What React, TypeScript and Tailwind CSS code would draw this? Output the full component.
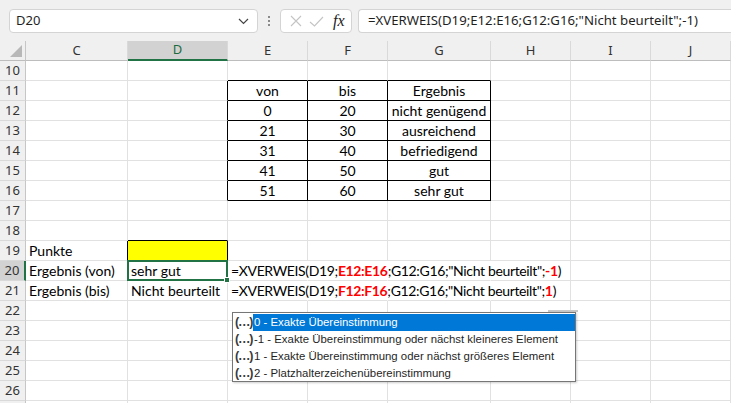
import React from 'react';

const cols = ['C', 'D', 'E', 'F', 'G', 'H', 'I', 'J'];
const widths = ['w-[102px]', 'w-[100px]', 'w-[80px]', 'w-[80px]', 'w-[103px]', 'w-[80px]', 'w-[80px]', 'w-[80px]'];

const table: Record<number, string[]> = {
  11: ['von', 'bis', 'Ergebnis'],
  12: ['0', '20', 'nicht genügend'],
  13: ['21', '30', 'ausreichend'],
  14: ['31', '40', 'befriedigend'],
  15: ['41', '50', 'gut'],
  16: ['51', '60', 'sehr gut'],
};

const rows = [10, 11, 12, 13, 14, 15, 16, 17, 18, 19, 20, 21, 22, 23, 24, 25, 26, 27];

function Formula({ range, last }: { range: string; last: string }) {
  return (
    <span className="tracking-[-0.35px]">
      =XVERWEIS(D19;<span className="text-[#ff0000] font-bold">{range}</span>;G12:G16;"Nicht beurteilt";
      <span className="text-[#ff0000] font-bold">{last}</span>)
    </span>
  );
}

function cellContent(r: number, c: number) {
  if (table[r] && c >= 2 && c <= 4) return table[r][c - 2];
  if (c === 0) {
    if (r === 19) return 'Punkte';
    if (r === 20) return 'Ergebnis (von)';
    if (r === 21) return 'Ergebnis (bis)';
  }
  if (c === 1) {
    if (r === 20) return 'sehr gut';
    if (r === 21) return 'Nicht beurteilt';
  }
  if (c === 2) {
    if (r === 20) return <Formula range="E12:E16" last="-1" />;
    if (r === 21) return <Formula range="F12:F16" last="1" />;
  }
  return null;
}

function Cell({ r, c }: { r: number; c: number }) {
  const inTable = r >= 11 && r <= 16;
  const blackRight = (inTable && c >= 1 && c <= 4) || (r === 19 && c <= 1);
  const blackBottom = (r >= 10 && r <= 16 && c >= 2 && c <= 4) || ((r === 18 || r === 19) && c === 1);
  const overflowRow = (r === 20 || r === 21) && c >= 2 && c <= 4;
  const right = blackRight ? 'border-r-black' : overflowRow ? 'border-r-white' : 'border-r-[#e1e1e1]';
  const bottom = blackBottom ? 'border-b-black' : 'border-b-[#e1e1e1]';
  const centered = inTable && c >= 2 && c <= 4;
  const yellow = r === 19 && c === 1;
  return (
    <div
      className={`${widths[c]} h-[20px] shrink-0 border-r border-b ${right} ${bottom} ${yellow ? 'bg-[#ffff00]' : 'bg-white'} relative flex items-end leading-[18px] ${centered ? 'justify-center' : 'pl-[3px]'} whitespace-nowrap text-[14px] text-black`}
    >
      <span className={overflowRow ? 'relative z-10' : ''}>{cellContent(r, c)}</span>
      {r === 20 && c === 1 && (
        <div className="absolute -left-[1px] -top-[1px] w-[101px] h-[21px] border-2 border-[#217346] z-20">
          <div className="absolute -right-[4px] -bottom-[4px] w-[6px] h-[6px] bg-[#217346] border border-white" />
        </div>
      )}
    </div>
  );
}

export default function App() {
  return (
    <div className="w-[731px] h-[403px] overflow-hidden relative bg-white font-['Lato','Liberation_Sans',sans-serif]">
      {/* formula bar */}
      <div className="h-[41px] bg-[#f0f0f0] flex items-start pt-[9px] font-['Noto_Sans','Liberation_Sans',sans-serif]">
        <div className="ml-[9px] w-[249px] h-[24px] rounded-[4px] border border-[#d4d4d4] bg-white flex items-center justify-between pl-[6px] pr-[8px]">
          <span className="text-[13px] text-[#1f1f1f]">D20</span>
          <svg width="11" height="7" viewBox="0 0 11 7" fill="none">
            <path d="M1 1l4.5 4.5L10 1" stroke="#444" strokeWidth="1.2" />
          </svg>
        </div>
        <div className="w-[22px] h-[24px] flex flex-col items-center justify-center gap-[2px]">
          <div className="w-[2px] h-[2px] bg-[#8a8a8a]" />
          <div className="w-[2px] h-[2px] bg-[#8a8a8a]" />
          <div className="w-[2px] h-[2px] bg-[#8a8a8a]" />
        </div>
        <div className="w-[72px] h-[24px] rounded-[4px] border border-[#d4d4d4] bg-white flex items-center pl-[9px]">
          <svg width="12" height="12" viewBox="0 0 12 12">
            <path d="M1 1l10 10M11 1L1 11" stroke="#c4c4c4" strokeWidth="1.1" />
          </svg>
          <svg width="15" height="11" viewBox="0 0 15 11" className="ml-[7px]">
            <path d="M1 6l4.5 4L14 1" stroke="#c4c4c4" strokeWidth="1.1" fill="none" />
          </svg>
          <span className="ml-[9px] font-['Liberation_Serif',serif] italic text-[16px] text-[#222] leading-none">fx</span>
        </div>
        <div className="ml-[6px] flex-1 h-[24px] rounded-l-[4px] border border-r-0 border-[#d4d4d4] bg-white flex items-center pl-[9px] whitespace-nowrap text-[13.2px] text-[#1f1f1f]">
          =XVERWEIS(D19;E12:E16;G12:G16;"Nicht beurteilt";-1)
        </div>
      </div>

      {/* column headers */}
      <div className="flex h-[20px] bg-[#f0f0f0] font-['Noto_Sans','Liberation_Sans',sans-serif] text-[13px] text-[#333]">
        <div className="w-[26px] h-[20px] shrink-0 border-r border-b border-r-[#c6c6c6] border-b-[#bdbdbd] relative">
          <svg width="12" height="12" viewBox="0 0 12 12" className="absolute right-[3px] bottom-[3px]">
            <path d="M12 0V12H0Z" fill="#b8b8b8" />
          </svg>
        </div>
        {cols.map((c, i) => (
          <div
            key={c}
            className={`${widths[i]} h-[20px] shrink-0 flex items-center justify-center border-r border-r-[#d9d9d9] ${c === 'D' ? 'bg-[#d2d2d2] border-b-2 border-b-[#217346] text-[#1e6b40]' : 'border-b border-b-[#bdbdbd]'}`}
          >
            {c}
          </div>
        ))}
      </div>

      {/* rows */}
      {rows.map((r) => (
        <div key={r} className="flex">
          <div
            className={`w-[26px] h-[20px] shrink-0 flex items-center justify-center border-b border-b-[#d9d9d9] font-['Noto_Sans','Liberation_Sans',sans-serif] text-[13px] text-[#333] ${r === 20 ? 'bg-[#d2d2d2] border-r-2 border-r-[#217346]' : 'bg-[#f0f0f0] border-r border-r-[#c6c6c6]'}`}
          >
            {r < 27 ? r : ''}
          </div>
          {cols.map((_, c) => (
            <Cell key={c} r={r} c={c} />
          ))}
        </div>
      ))}

      {/* autocomplete list */}
      <div className="absolute left-[548px] top-[310px] w-[30px] h-[2px] bg-[#c8c8c8]" />
      <div className="absolute left-[232px] top-[312px] w-[344px] h-[70px] bg-white border border-[#767676] shadow-[1px_1px_2px_rgba(0,0,0,0.2)] pt-[1px] font-['Liberation_Sans',sans-serif] text-[11.4px] text-[#1f1f1f] whitespace-nowrap">
        {[
          '0 - Exakte Übereinstimmung',
          '-1 - Exakte Übereinstimmung oder nächst kleineres Element',
          '1 - Exakte Übereinstimmung oder nächst größeres Element',
          '2 - Platzhalterzeichenübereinstimmung',
        ].map((t, i) => (
          <div key={t} className="flex h-[17px] items-center">
            <span className="w-[20px] shrink-0 pl-[2px] font-bold text-[12.5px] text-[#3a3a3a] leading-none tracking-[-1.2px]">(…)</span>
            <span className={`flex-1 h-full flex items-center pl-[1px] ${i === 0 ? 'bg-[#0078d7] text-white' : ''}`}>{t}</span>
          </div>
        ))}
      </div>
    </div>
  );
}
